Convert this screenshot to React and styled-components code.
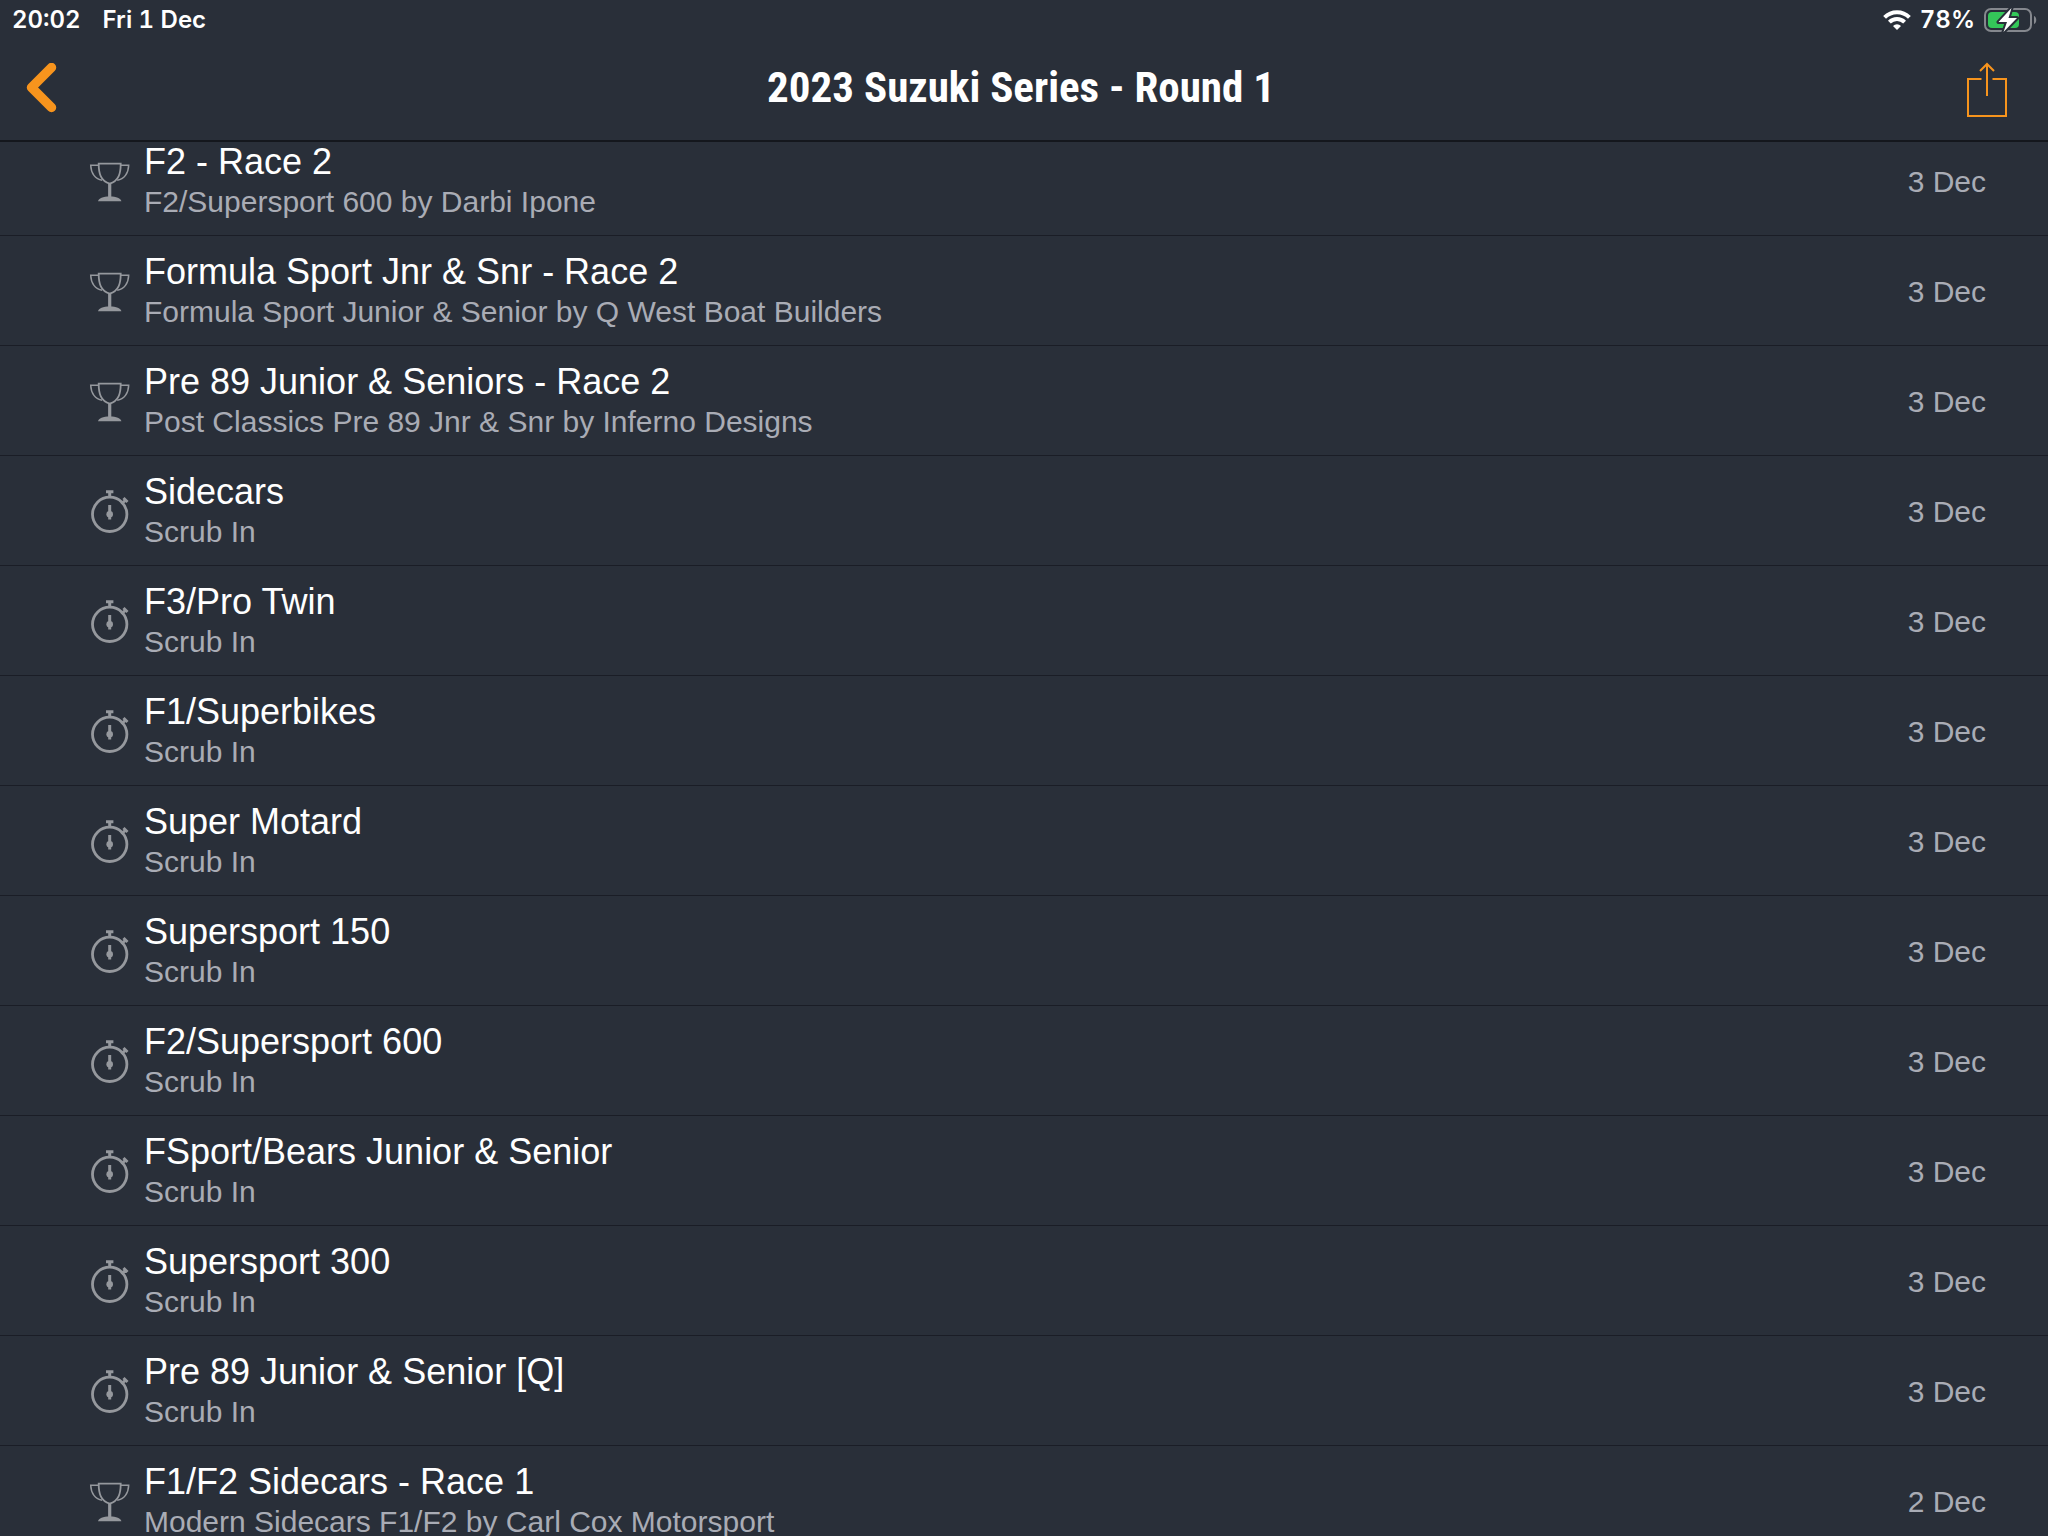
import styled, { createGlobalStyle } from 'styled-components';

const GlobalStyle = createGlobalStyle`
  * {
    box-sizing: border-box;
  }
  body {
    margin: 0;
    background-color: #292f39;
    color: white;
    font-family: "Helvetica Neue", "Liberation Sans", Arial, sans-serif;
  }
`;

const sessions = [
  { type: 'race', name: 'F2 - Race 2', group: 'F2/Supersport 600 by Darbi Ipone', date: '3 Dec' },
  { type: 'race', name: 'Formula Sport Jnr & Snr - Race 2', group: 'Formula Sport Junior & Senior by Q West Boat Builders', date: '3 Dec' },
  { type: 'race', name: 'Pre 89 Junior & Seniors - Race 2', group: 'Post Classics Pre 89 Jnr & Snr by Inferno Designs', date: '3 Dec' },
  { type: 'practice', name: 'Sidecars', group: 'Scrub In', date: '3 Dec' },
  { type: 'practice', name: 'F3/Pro Twin', group: 'Scrub In', date: '3 Dec' },
  { type: 'practice', name: 'F1/Superbikes', group: 'Scrub In', date: '3 Dec' },
  { type: 'practice', name: 'Super Motard', group: 'Scrub In', date: '3 Dec' },
  { type: 'practice', name: 'Supersport 150', group: 'Scrub In', date: '3 Dec' },
  { type: 'practice', name: 'F2/Supersport 600', group: 'Scrub In', date: '3 Dec' },
  { type: 'practice', name: 'FSport/Bears Junior & Senior', group: 'Scrub In', date: '3 Dec' },
  { type: 'practice', name: 'Supersport 300', group: 'Scrub In', date: '3 Dec' },
  { type: 'practice', name: 'Pre 89 Junior & Senior [Q]', group: 'Scrub In', date: '3 Dec' },
  { type: 'race', name: 'F1/F2 Sidecars - Race 1', group: 'Modern Sidecars F1/F2 by Carl Cox Motorsport', date: '2 Dec' },
];

function WifiIcon() {
  return <svg width="28" height="20" viewBox="0 0 28 20" fill="none" stroke="white" strokeWidth="4">
    <path d="M1.6 7.4a17.6 17.6 0 0 1 24.8 0" />
    <path d="M6.4 12.2a10.8 10.8 0 0 1 15.2 0" />
    <path d="M14 20l-4-4a5.7 5.7 0 0 1 8 0z" fill="white" stroke="none" />
  </svg>
}

function BatteryIcon() {
  return <svg width="54" height="26" viewBox="0 0 54 26">
    <rect x="1" y="2" width="46" height="22" rx="6" fill="none" stroke="#85888e" strokeWidth="2" />
    <path d="M50 9v8c3-1 3-7 0-8z" fill="#85888e" />
    <rect x="4" y="5" width="31" height="16" rx="4" fill="#34c759" />
    <path d="M27.5 1L14.5 15h8.5L19.5 25 33 11h-8.5z" fill="white" stroke="#292f39" strokeWidth="4" paintOrder="stroke" strokeLinejoin="round" />
  </svg>
}

function BackIcon() {
  return <svg width="32" height="50" viewBox="0 0 32 50" fill="none" stroke="#f7941d" strokeWidth="9.5" strokeLinecap="round" strokeLinejoin="round">
    <path d="M25.5 4.5L5.5 24.500l20 20" />
  </svg>
}

function ShareIcon() {
  return <svg width="42" height="60" viewBox="0 0 42 60" fill="none" stroke="#f7941d" strokeWidth="2">
    <path d="M15.5 21H2v37h38V21H26.500" />
    <path d="M21 38V6M14 13l7-7 7 7" />
  </svg>
}

function TrophyIcon() {
  return <svg width="44" height="44" viewBox="0 0 44 44" fill="none" stroke="#95989d" strokeWidth="1.8">
    <path d="M10.700 4.700h22c0 10-2 17-11 20-9-3-11-10-11-20z" />
    <path d="M10.700 6.300h-8c.3 8 4.500 14 11.500 15M32.700 6.300h8c-.3 8-4.500 14-11.500 15" strokeWidth="1.500" />
    <path d="M21.700 24v14" strokeWidth="3.200" />
    <path d="M10 42.300c.6-3 5-4.800 11.700-4.800s11.100 1.800 11.700 4.800z" fill="#95989d" stroke="none" />
  </svg>
}

function StopwatchIcon() {
  return <svg width="44" height="44" viewBox="0 0 44 44" fill="none" stroke="#95989d" strokeWidth="3">
    <circle cx="21.700" cy="25.300" r="17.200" strokeWidth="2.800" />
    <path d="M18 2.700h7.400M21.700 3v5M35.500 9l4 4M37.500 11l-4 4" />
    <path d="M21.700 16v14.500" />
    <circle cx="21.700" cy="25.300" r="3.300" fill="#95989d" stroke="none" />
  </svg>
}

function StatusBar() {
  return <StatusBar_style>
    <span>20:02</span>
    <span>Fri 1 Dec</span>
    <div className="estado">
      <WifiIcon />
      <span>78%</span>
      <BatteryIcon />
    </div>
  </StatusBar_style>
}

function Header({ title }) {
  return <Header_style>
    <IconButton aria-label="Back"><BackIcon /></IconButton>
    <Title>{title}</Title>
    <IconButton $right aria-label="Share"><ShareIcon /></IconButton>
  </Header_style>
}

function Session({ session }) {
  return <Row>
    {session.type === 'race' ? <TrophyIcon /> : <StopwatchIcon />}
    <Info>
      <Name>{session.name}</Name>
      <Detail>{session.group}</Detail>
    </Info>
    <SessionDate>{session.date}</SessionDate>
  </Row>
}

export default function App() {
  return <Screen>
    <GlobalStyle />
    <StatusBar />
    <Header title="2023 Suzuki Series - Round 1" />
    <Sessions>
      <List>
        {sessions.map((session) => <Session key={session.name} session={session} />)}
      </List>
    </Sessions>
  </Screen>
}

const Screen = styled.div`
  display: flex;
  flex-direction: column;
  height: 100vh;
  overflow: hidden;
`;

const StatusBar_style = styled.div`
  display: flex;
  align-items: center;
  gap: 22px;
  flex: none;
  height: 36px;
  padding: 4px 10px 0 12px;
  font-family: Inter, sans-serif;
  font-size: 24px;
  font-weight: 600;
  font-variant-numeric: tabular-nums;
  line-height: 32px;

  .estado {
    display: flex;
    align-items: center;
    gap: 9px;
    margin-left: auto;
  }
`;

const Header_style = styled.header`
  display: grid;
  grid-template-columns: 1fr auto 1fr;
  align-items: center;
  flex: none;
  height: 106px;
  padding: 0 32px 0 26px;
  border-bottom: 2px solid #14171d;
`;

const IconButton = styled.button`
  display: flex;
  justify-self: ${({ $right }) => ($right ? 'end' : 'start')};
  padding: 0 ${({ $right }) => ($right ? '8px' : '0')} 0 0;
  border: none;
  background: none;
  cursor: pointer;
`;

const Title = styled.h1`
  margin: 0;
  padding-bottom: 2px;
  font-family: "Roboto Condensed", "Liberation Sans Narrow", "Liberation Sans", sans-serif;
  font-size: 43px;
  font-weight: 700;
  line-height: 52px;
`;

const Sessions = styled.main`
  flex: 1;
  min-height: 0;
  overflow: hidden;
`;

/* list is scrolled a little under the header */
const List = styled.ul`
  margin: -16px 0 0;
  padding: 0;
  list-style: none;
`;

const Row = styled.li`
  display: flex;
  align-items: center;
  gap: 12px;
  height: 110px;
  padding: 0 62px 0 88px;
  border-bottom: 1px solid #1a1d26;

  svg {
    flex: none;
  }
`;

const Info = styled.div`
  flex: 1;
  min-width: 0;
  padding-top: 3px;
`;

const Name = styled.div`
  font-size: 36px;
  line-height: 40px;
`;

const Detail = styled.div`
  color: #a9acb5;
  font-size: 30px;
  line-height: 40px;
`;

const SessionDate = styled(Detail).attrs({ as: 'time' })`
  padding-top: 3px;
`;
